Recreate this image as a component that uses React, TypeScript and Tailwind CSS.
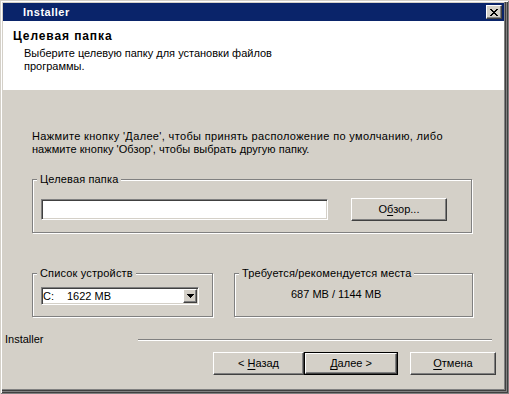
import React from 'react';

const FONT = "font-['Liberation_Sans',Arial,sans-serif]";

const xRows = ['11000011', '01100110', '00111100', '00011000', '00111100', '01100110', '11000011'];

function CloseGlyph() {
  return (
    <svg width="8" height="7" viewBox="0 0 8 7" shapeRendering="crispEdges">
      {xRows.map((row, y) =>
        row.split('').map((c, x) => (c === '1' ? <rect key={`${x}-${y}`} x={x} y={y} width="1" height="1" fill="#000" /> : null))
      )}
    </svg>
  );
}

function Button({ children, className = '' }: { children: React.ReactNode; className?: string }) {
  return (
    <div
      className={`flex items-center justify-center bg-[#d4d0c8] border border-t-white border-l-white border-r-[#404040] border-b-[#404040] shadow-[inset_-1px_-1px_0_#808080] text-[11px] leading-[13px] text-black ${className}`}
    >
      <span className="whitespace-pre">{children}</span>
    </div>
  );
}

function Group({ label, className = '', children }: { label: string; className?: string; children?: React.ReactNode }) {
  return (
    <div className={`relative border border-[#808080] shadow-[inset_1px_1px_0_#fff,1px_1px_0_#fff] ${className}`}>
      <span className="absolute left-[4px] top-[-7px] bg-[#d4d0c8] px-[3px] text-[11px] leading-[13px] tracking-[0.15px] text-black">
        {label}
      </span>
      {children}
    </div>
  );
}

function Sunken({ className = '', children }: { className?: string; children?: React.ReactNode }) {
  return (
    <div
      className={`bg-white border border-t-[#808080] border-l-[#808080] border-r-white border-b-white shadow-[inset_1px_1px_0_#404040,inset_-1px_-1px_0_#d4d0c8] ${className}`}
    >
      {children}
    </div>
  );
}

const U = ({ children }: { children: React.ReactNode }) => (
  <span className="underline underline-offset-[2px] decoration-1">{children}</span>
);

export default function App() {
  return (
    <div
      className={`${FONT} w-[509px] h-[394px] bg-[#d4d0c8] pt-[3px] pl-[3px] pr-[5px] pb-[6px] flex flex-col shadow-[inset_1px_1px_0_#d4d0c8,inset_-1px_-1px_0_#808080,inset_2px_2px_0_#fff,inset_-2px_-2px_0_#404040,inset_-3px_-3px_0_#808080,inset_-4px_-4px_0_#404040,inset_-5px_-5px_0_#808080]`}
    >
      {/* title bar */}
      <div className="h-[18px] bg-[#0a246a] flex items-center justify-between pl-[20px] pr-[2px]">
        <span className="text-white font-bold text-[11px] leading-[13px] tracking-[0.5px]">Installer</span>
        <div className="w-[16px] h-[14px] flex items-center justify-center bg-[#d4d0c8] border border-t-white border-l-white border-r-[#404040] border-b-[#404040] shadow-[inset_-1px_-1px_0_#808080]">
          <CloseGlyph />
        </div>
      </div>

      {/* header */}
      <div className="h-[69px] bg-white pl-[10px] pt-[9px] text-black">
        <div className="font-bold text-[12px] leading-[13px] tracking-[0.9px]">Целевая папка</div>
        <div className="mt-[4px] pl-[11px] text-[11px] leading-[13px] w-[280px]">
          Выберите целевую папку для установки файлов программы.
        </div>
      </div>

      {/* body */}
      <div className="flex-1 flex flex-col pt-[40px] text-black">
        <div className="pl-[29px] text-[11px] leading-[13px]">
          <p className="tracking-[0.35px]">Нажмите кнопку 'Далее', чтобы принять расположение по умолчанию, либо</p>
          <p className="tracking-[0.05px]">нажмите кнопку 'Обзор', чтобы выбрать другую папку.</p>
        </div>

        <div className="pl-[29px] mt-[23px]">
          <Group label="Целевая папка" className="w-[440px] h-[54px] pt-[18px] pl-[8px]">
            <div className="flex items-center h-[23px]">
              <Sunken className="w-[287px] h-[21px]" />
              <Button className="ml-[23px] w-[96px] h-[23px]">
                О<U>б</U>зор...
              </Button>
            </div>
          </Group>
        </div>

        <div className="pl-[29px] mt-[40px] flex gap-[21px]">
          <Group label="Список устройств" className="w-[181px] h-[44px] pt-[13px] pl-[8px]">
            <Sunken className="w-[158px] h-[18px] flex items-center text-[11px] leading-[13px]">
              <span className="pl-[1px] w-[25px]">C:</span>
              <span className="flex-1">1622 MB</span>
              <div className="w-[14px] h-[14px] mr-[1px] flex items-center justify-center bg-[#d4d0c8] border border-t-white border-l-white border-r-[#404040] border-b-[#404040] shadow-[inset_-1px_-1px_0_#808080]">
                <svg width="7" height="4" viewBox="0 0 7 4" shapeRendering="crispEdges">
                  <path d="M0 0h7v1h-1v1h-1v1h-1v1h-1v-1h-1v-1h-1v-1h-1z" fill="#000" />
                </svg>
              </div>
            </Sunken>
          </Group>
          <Group label="Требуется/рекомендуется места" className="w-[239px] h-[44px] pt-[14px] pl-[56px]">
            <div className="text-[11px] leading-[13px]">687 MB / 1144 MB</div>
          </Group>
        </div>

        <div className="mt-[16px] h-[13px] flex items-center text-[11px] leading-[13px]">
          <span className="pl-[2px] text-[#000]">Installer</span>
          <div className="ml-auto mr-[12px] w-[354px] border-t border-t-[#808080] border-b border-b-white" />
        </div>

        <div className="mt-[6px] flex pr-[8px]">
          <div className="ml-auto flex">
            <Button className="w-[91px] h-[23px]">
              {'< '}<U>Н</U>азад
            </Button>
            <div className="border border-black">
              <Button className="w-[92px] h-[21px]">
                <U>Д</U>{'алее >'}
              </Button>
            </div>
            <Button className="ml-[12px] w-[86px] h-[23px]">
              <U>О</U>тмена
            </Button>
          </div>
        </div>
      </div>
    </div>
  );
}
